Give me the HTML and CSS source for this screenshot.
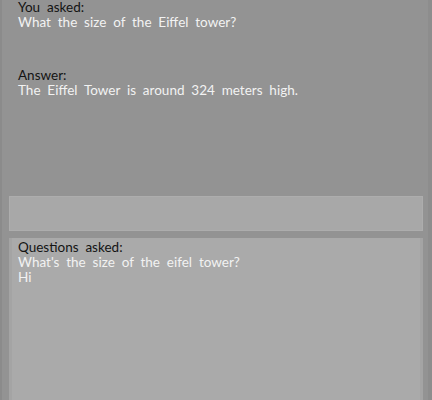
FILE: index.html
```html
<!DOCTYPE html>
<html>
<head>
<meta charset="utf-8">
<link rel="stylesheet" href="styles.css">
</head>
<body>
<div class="window">
  <div class="chat">
    <div class="label">You asked:</div>
    <div class="value">What the size of the Eiffel tower?</div>
    <div class="label answer">Answer:</div>
    <div class="value">The Eiffel Tower is around 324 meters high.</div>
  </div>
  <div class="input"></div>
  <div class="history">
    <div class="label">Questions asked:</div>
    <div class="value">What's the size of the eifel tower?</div>
    <div class="value">Hi</div>
  </div>
</div>
</body>
</html>
```
FILE: styles.css
```css
html, body {
  margin: 0;
  padding: 0;
  height: 100%;
  background: #939393;
}
.window {
  box-sizing: border-box;
  height: 400px;
  border-left: 2px solid #8b8b8b;
  border-right: 4px solid #8d8d8d;
  display: flex;
  flex-direction: column;
  font-family: Lato, "Noto Sans", sans-serif;
  font-size: 13.5px;
  line-height: 15px;
  word-spacing: 3.4px;
}
.chat {
  height: 196px;
  box-sizing: border-box;
  padding: 0 0 0 16px;
}
.label {
  color: #141414;
}
.value {
  color: #f2f2f2;
}
.answer {
  margin-top: 38px;
}
.input {
  margin: 0 5px 0 7px;
  height: 35px;
  box-sizing: border-box;
  background: #a8a8a8;
  border: 1px solid #adadad;
}
.history {
  margin: 7px 5px 0 7px;
  flex: 1;
  box-sizing: border-box;
  background: #aaaaaa;
  border-left: 3px solid #a4a4a4;
  border-right: 3px solid #a4a4a4;
  padding: 2px 0 0 6px;
}
```
